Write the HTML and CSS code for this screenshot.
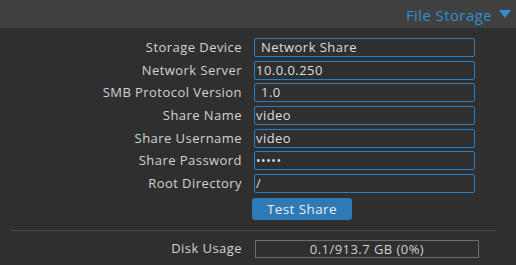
FILE: index.html
```html
<!DOCTYPE html>
<html>
<head>
<meta charset="utf-8">
<link rel="stylesheet" href="styles.css">
</head>
<body>
<div class="header">
  <span class="title">File Storage</span>
  <svg class="caret" width="12" height="9" viewBox="0 0 12 9"><polygon points="0,0 12,0 6,8" fill="#2f8fd6"/></svg>
</div>
<div class="content">
  <div class="form">
    <div class="row"><label class="lbl">Storage Device</label><div class="field pad">Network Share</div></div>
    <div class="row"><label class="lbl">Network Server</label><div class="field">10.0.0.250</div></div>
    <div class="row"><label class="lbl">SMB Protocol Version</label><div class="field pad">1.0</div></div>
    <div class="row"><label class="lbl">Share Name</label><div class="field">video</div></div>
    <div class="row"><label class="lbl">Share Username</label><div class="field">video</div></div>
    <div class="row"><label class="lbl">Share Password</label><div class="field dots">•••••</div></div>
    <div class="row"><label class="lbl">Root Directory</label><div class="field">/</div></div>
    <div class="btnrow"><button class="btn">Test Share</button></div>
  </div>
  <div class="sep"></div>
  <div class="usage">
    <label class="lbl">Disk Usage</label>
    <div class="bar">0.1/913.7 GB (0%)</div>
  </div>
  <div class="sep bottom"></div>
</div>
</body>
</html>
```
FILE: styles.css
```css
* { box-sizing: border-box; }
html, body { margin: 0; padding: 0; }
body {
  width: 516px;
  height: 265px;
  overflow: hidden;
  background: #2f2f2f;
  font-family: "Open Sans", "DejaVu Sans", sans-serif;
  font-size: 13px;
  letter-spacing: 0.45px;
  color: #d8d8d8;
}
.header {
  height: 28px;
  background: #404040;
  display: flex;
  align-items: center;
  justify-content: flex-end;
  padding-right: 5px;
}
.title {
  color: #2f8fd6;
  font-size: 15px;
  letter-spacing: 0.4px;
  margin-right: 7px;
  margin-top: 1px;
}
.caret { display: block; margin-top: 1px; }
.content { padding-top: 10px; }
.form {
  display: flex;
  flex-direction: column;
  gap: 3.67px;
}
.row {
  display: flex;
  align-items: center;
  height: 19px;
}
.lbl {
  width: 242px;
  text-align: right;
  color: #d2d2d2;
  line-height: 19px;
}
.field {
  margin-left: 12px;
  width: 221px;
  height: 19px;
  border: 1px solid #2a7ec2;
  border-radius: 2px;
  line-height: 17px;
  padding-left: 1px;
  color: #dedede;
  white-space: nowrap;
}
.field.pad { padding-left: 6px; }
.field.dots { font-size: 12px; letter-spacing: 0.6px; }
.btnrow { padding-left: 252px; margin-top: 1px; }
.btn {
  display: block;
  width: 100px;
  height: 22px;
  background: #2f7ab4;
  border: none;
  border-radius: 3px;
  color: #e8eef4;
  font-family: inherit;
  font-size: 13.5px;
  letter-spacing: 0.4px;
  padding: 0;
}
.sep {
  margin: 10px 20px 0 10px;
  height: 1px;
  background: #474747;
}
.usage {
  display: flex;
  align-items: center;
  margin-top: 9px;
  height: 18px;
}
.bar {
  margin-left: 13px;
  width: 224px;
  height: 18px;
  border: 1px solid #6e6e6e;
  text-align: center;
  line-height: 16px;
  color: #d0d0d0;
}
.sep.bottom { margin-top: 8px; }
```
